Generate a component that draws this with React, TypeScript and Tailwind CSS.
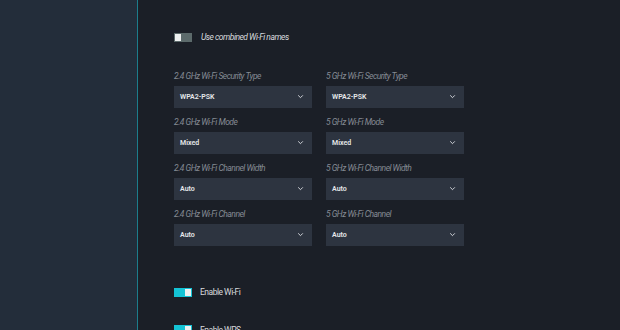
import React from 'react';

const rows = [
  ['Security Type', 'WPA2-PSK'],
  ['Mode', 'Mixed'],
  ['Channel Width', 'Auto'],
  ['Channel', 'Auto'],
];

const Chevron = () => (
  <svg className="w-[7px] h-[7px] text-gray-200" viewBox="0 0 24 24" fill="none" stroke="currentColor">
    <path strokeLinecap="round" strokeLinejoin="round" strokeWidth={3} d="M5 9l7 7 7-7" />
  </svg>
);

const Field = ({ label, value }: { label: string; value: string }) => (
  <div className="w-[138px]">
    <p className="text-[8.5px] italic text-[#858b94] leading-none h-[8px] tracking-[-0.5px]">{label}</p>
    <div className="mt-[6px] h-[22px] bg-[#2d3440] flex items-center justify-between pl-[6px] pr-[8px]">
      <span className="text-[7px] font-semibold text-[#e6e8ea]">{value}</span>
      <Chevron />
    </div>
  </div>
);

const Toggle = ({ on }: { on: boolean }) => (
  <div
    className={`w-[18px] h-[9px] flex items-center px-[1px] ${on ? 'bg-[#14c3d5] justify-end' : 'bg-[#5c6a6b] justify-start'}`}
  >
    <div className="w-[6px] h-[7px] bg-[#eef0f0]" />
  </div>
);

export default function App() {
  return (
    <div className="w-[620px] h-[330px] overflow-hidden flex bg-[#1b1f27]" style={{ fontFamily: 'Roboto, "Liberation Sans", sans-serif' }}>
      {/* sidebar */}
      <div className="w-[138px] h-full bg-[#232d3a] border-r border-[#1c7d8c]" />

      {/* main */}
      <div className="flex-1 flex flex-col">
        <div className="h-[6px] bg-[#222a36] shadow-[0_2px_4px_rgba(0,0,0,0.35)]" />
        <div className="pl-[36px] pt-[31px]">
          <div className="flex items-center gap-[9px]">
            <Toggle on={false} />
            <span className="text-[8.5px] italic text-[#d8dadd] tracking-[-0.5px]">Use combined Wi-Fi names</span>
          </div>

          <div className="mt-[28px] flex flex-col gap-[10px]">
            {rows.map(([name, value]) => (
              <div key={name} className="flex gap-[14px]">
                <Field label={`2.4 GHz Wi-Fi ${name}`} value={value} />
                <Field label={`5 GHz Wi-Fi ${name}`} value={value} />
              </div>
            ))}
          </div>

          <div className="mt-[40px] flex items-center gap-[8px]">
            <Toggle on />
            <span className="text-[8.5px] text-[#d8dadd] tracking-[-0.5px]">Enable Wi-Fi</span>
          </div>
          <div className="mt-[25px] flex items-center gap-[8px]">
            <Toggle on />
            <span className="text-[8.5px] text-[#d8dadd] tracking-[-0.5px]">Enable WPS</span>
          </div>
        </div>
      </div>
    </div>
  );
}
